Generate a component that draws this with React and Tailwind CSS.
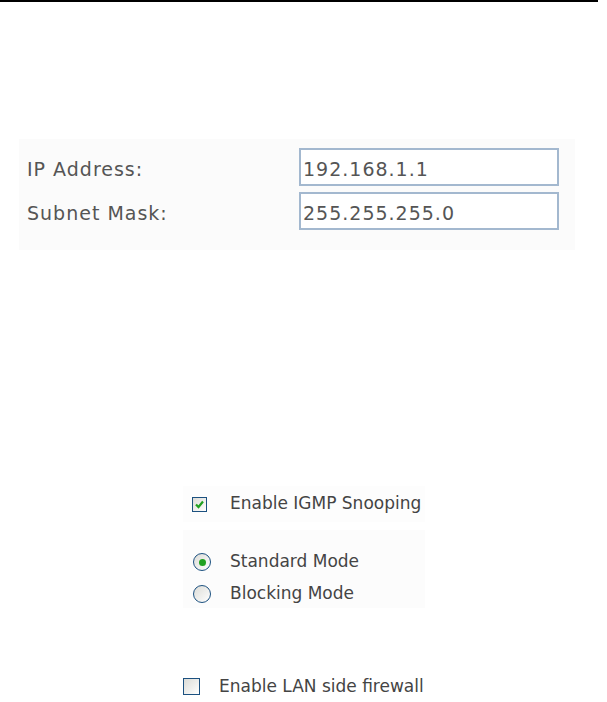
import React from 'react';

const Field = ({ label, value }) => (
  <div className="flex items-center h-[38px]">
    <span className="w-[280px] pl-[8px] pt-[4px] text-[19px] tracking-[1px] text-[#555]">{label}</span>
    <div className="w-[260px] h-[38px] border-2 border-[#a3b8cf] bg-white flex items-center px-[2px] pt-[4px] text-[19px] tracking-[1px] text-[#555]">
      {value}
    </div>
  </div>
);

const CheckBox = ({ checked, size = 'w-[15px] h-[15px]' }) => (
  <span className={`${size} border border-[#1c5180] bg-gradient-to-br from-[#dcdcd7] to-white flex items-center justify-center`}>
    {checked && (
      <svg width="11" height="11" viewBox="0 0 11 11">
        <path d="M2 5.5 L4.5 8 L9 2.5" stroke="#21a121" strokeWidth="2.2" fill="none" />
      </svg>
    )}
  </span>
);

const Radio = ({ checked }) => (
  <span className="w-[18px] h-[18px] rounded-full border border-[#1c5180] bg-gradient-to-br from-[#dcdcd7] to-white flex items-center justify-center">
    {checked && <span className="w-[7px] h-[7px] rounded-full bg-[#21a121]" />}
  </span>
);

export default function App() {
  return (
    <div className="w-[607px] h-[702px] bg-white overflow-hidden" style={{ fontFamily: '"DejaVu Sans", sans-serif' }}>
      <div className="w-[598px] h-[2px] bg-black" />

      <div className="ml-[19px] mt-[137px] w-[556px] h-[111px] bg-[#fbfbfb] pt-[9px] flex flex-col gap-[6px]">
        <Field label="IP Address:" value="192.168.1.1" />
        <Field label="Subnet Mask:" value="255.255.255.0" />
      </div>

      <div className="ml-[183px] mt-[236px] w-[242px] h-[36px] bg-[#fdfdfd] flex items-center gap-[23px] pl-[9px]">
        <CheckBox checked />
        <span className="text-[17px] text-[#444]">Enable IGMP Snooping</span>
      </div>

      <div className="ml-[183px] mt-[8px] w-[242px] h-[78px] bg-[#fcfcfc] pt-[22px]">
        <div className="flex items-center gap-[19px] pl-[10px] h-[20px]">
          <Radio checked />
          <span className="text-[17px] text-[#444]">Standard Mode</span>
        </div>
        <div className="mt-[12px] flex items-center gap-[19px] pl-[10px] h-[20px]">
          <Radio />
          <span className="text-[17px] text-[#444]">Blocking Mode</span>
        </div>
      </div>

      <div className="ml-[183px] mt-[70px] h-[17px] flex items-center gap-[19px]">
        <CheckBox size="w-[17px] h-[17px]" />
        <span className="text-[17px] text-[#444]">Enable LAN side firewall</span>
      </div>
    </div>
  );
}
